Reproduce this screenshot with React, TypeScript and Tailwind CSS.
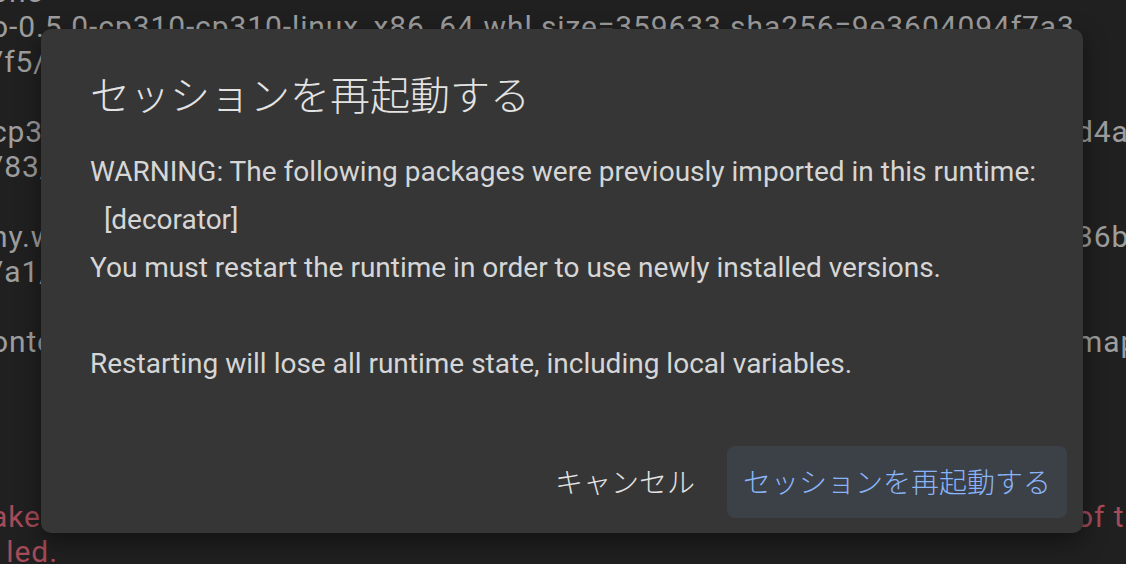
import React from 'react';

type Line = { left: string; right: string; red?: boolean };

const lines: Line[] = [
  { left: 'one', right: '' },
  { left: 'o-0.5.0-cp310-cp310-linux_x86_64.whl size=359633 sha256=9e3604094f7a33fa1c2b', right: '' },
  { left: '/f5/a2/0c/1e', right: '' },
  { left: '', right: '' },
  { left: 'cp310-cp310-linux_x86_64.whl', right: 'd4a9b1e7' },
  { left: '/83/b6/1f', right: '' },
  { left: '', right: '' },
  { left: 'ny.whl', right: '36b0e2' },
  { left: '/a1/c9/e4', right: '' },
  { left: '', right: '' },
  { left: 'ontools', right: 'mapping' },
  { left: '', right: '' },
  { left: '', right: '' },
  { left: '', right: '' },
  { left: '', right: '' },
  { left: 'ake sure', right: 'of the', red: true },
  { left: '\u2009 led.', right: '', red: true },
];

const sans = "font-['Roboto','Liberation_Sans','Noto_Sans_CJK_JP',sans-serif]";
const cjk = "font-['Noto_Sans_CJK_JP','Roboto',sans-serif]";

export default function App() {
  return (
    <div className="relative h-[564px] w-[1126px] overflow-hidden bg-[#202020]">
      {/* terminal output behind the dialog */}
      <div className="-ml-[9px] -mt-[26px] font-['Roboto','Liberation_Sans',sans-serif] text-[30px] leading-[35px] tracking-[0.9px]">
        {lines.map((l, i) => (
          <div
            key={i}
            className={`grid h-[35px] grid-cols-[1085px_1fr] whitespace-pre ${
              l.red ? 'text-[#a54b59]' : 'text-[#9e9e9e]'
            }`}
          >
            <span className="overflow-hidden">{l.left}</span>
            <span className="overflow-hidden">{l.right}</span>
          </div>
        ))}
      </div>

      {/* dialog */}
      <div className="absolute left-[41px] top-[29px] w-[1042px] rounded-[10px] bg-[#363636] px-[16px] pb-[15px] pt-[38px] shadow-[0_8px_24px_rgba(0,0,0,0.45)]">
        <h2 className={`${cjk} px-[33px] text-[40px] font-light leading-[52px] text-[#e3e3e3]`}>
          セッションを再起動する
        </h2>
        <p
          className={`${sans} mt-[29px] whitespace-pre-wrap pl-[33px] text-[28px] leading-[48px] text-[#d6d6d6]`}
        >
          {'WARNING: The following packages were previously imported in this runtime:\n  [decorator]\nYou must restart the runtime in order to use newly installed versions.\n\nRestarting will lose all runtime state, including local variables.'}
        </p>
        <div className="mt-[58px] flex justify-end gap-[16px]">
          <button className={`${cjk} h-[72px] rounded-[8px] px-[16px] pb-[3px] text-[28px] font-light text-[#e3e3e3]`}>
            キャンセル
          </button>
          <button
            className={`${cjk} h-[72px] rounded-[8px] bg-[#3c4047] px-[16px] pb-[3px] text-[28px] font-light text-[#8ab4f8]`}
          >
            セッションを再起動する
          </button>
        </div>
      </div>
    </div>
  );
}
